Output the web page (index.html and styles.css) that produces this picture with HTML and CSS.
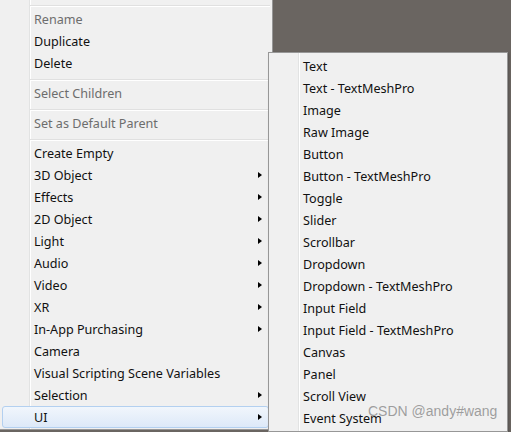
FILE: index.html
```html
<!DOCTYPE html>
<html>
<head>
<meta charset="utf-8">
<link rel="stylesheet" href="styles.css">
</head>
<body>
<div class="desk">
  <div class="menu main">
    <div class="sep"></div>
    <div class="item disabled">Rename</div>
    <div class="item">Duplicate</div>
    <div class="item">Delete</div>
    <div class="sep"></div>
    <div class="item disabled">Select Children</div>
    <div class="sep"></div>
    <div class="item disabled">Set as Default Parent</div>
    <div class="sep"></div>
    <div class="item">Create Empty</div>
    <div class="item has-sub">3D Object<span class="arrow"></span></div>
    <div class="item has-sub">Effects<span class="arrow"></span></div>
    <div class="item has-sub">2D Object<span class="arrow"></span></div>
    <div class="item has-sub">Light<span class="arrow"></span></div>
    <div class="item has-sub">Audio<span class="arrow"></span></div>
    <div class="item has-sub">Video<span class="arrow"></span></div>
    <div class="item has-sub">XR<span class="arrow"></span></div>
    <div class="item has-sub">In-App Purchasing<span class="arrow"></span></div>
    <div class="item">Camera</div>
    <div class="item">Visual Scripting Scene Variables</div>
    <div class="item has-sub">Selection<span class="arrow"></span></div>
    <div class="item has-sub active">UI<span class="arrow"></span></div>
  </div>
  <div class="menu sub">
    <div class="item">Text</div>
    <div class="item">Text - TextMeshPro</div>
    <div class="item">Image</div>
    <div class="item">Raw Image</div>
    <div class="item">Button</div>
    <div class="item">Button - TextMeshPro</div>
    <div class="item">Toggle</div>
    <div class="item">Slider</div>
    <div class="item">Scrollbar</div>
    <div class="item">Dropdown</div>
    <div class="item">Dropdown - TextMeshPro</div>
    <div class="item">Input Field</div>
    <div class="item">Input Field - TextMeshPro</div>
    <div class="item">Canvas</div>
    <div class="item">Panel</div>
    <div class="item">Scroll View</div>
    <div class="item">Event System</div>
  </div>
  <div class="watermark">CSDN @andy#wang</div>
</div>
</body>
</html>
```
FILE: styles.css
```css
* { box-sizing: border-box; }
html, body {
  margin: 0;
  padding: 0;
  width: 511px;
  height: 432px;
  overflow: hidden;
  background: #6a6561;
}
.desk {
  position: relative;
  width: 511px;
  height: 432px;
  font-family: "Noto Sans", "Open Sans", sans-serif;
  font-size: 12.6px;
  color: #111;
}
.menu {
  background-color: #f0f0f0;
  background-image: linear-gradient(to right, transparent 29px, #e2e3e3 29px, #e2e3e3 30px, #ffffff 30px, #ffffff 31px, transparent 31px);
  background-repeat: no-repeat;
  border: 1px solid #979797;
}
.main {
  margin-left: -1px;
  width: 274px;
  border-top: none;
  padding-bottom: 1px;
}
.sub {
  position: absolute;
  left: 268px;
  top: 52px;
  width: 240px;
  padding: 2px 0;
  box-shadow: 1px 1px 2px rgba(0,0,0,0.2);
}
.item {
  display: flex;
  align-items: center;
  height: 22px;
  margin: 0 3px 0 2px;
  padding-left: 31px;
  padding-right: 6px;
  border: 1px solid transparent;
  border-radius: 3px;
  white-space: nowrap;
}
.disabled { color: #6d6d6d; }
.has-sub .arrow {
  margin-left: auto;
  width: 0;
  height: 0;
  border-left: 4px solid #000;
  border-top: 3.5px solid transparent;
  border-bottom: 3.5px solid transparent;
}
.active {
  border-color: #b3d0f0;
  background: linear-gradient(to bottom, #f1f6fc, #dde9f8);
}
.sep {
  height: 8px;
  margin-left: 30px;
  margin-right: 2px;
  background: linear-gradient(to bottom, transparent 5px, #e0e0e0 5px, #e0e0e0 6px, #ffffff 6px, #ffffff 7px, transparent 7px);
}
.watermark {
  position: absolute;
  left: 368px;
  top: 403px;
  font-family: "Liberation Sans", Arial, sans-serif;
  font-size: 14px;
  color: rgba(130, 130, 130, 0.75);
  white-space: nowrap;
}
```
